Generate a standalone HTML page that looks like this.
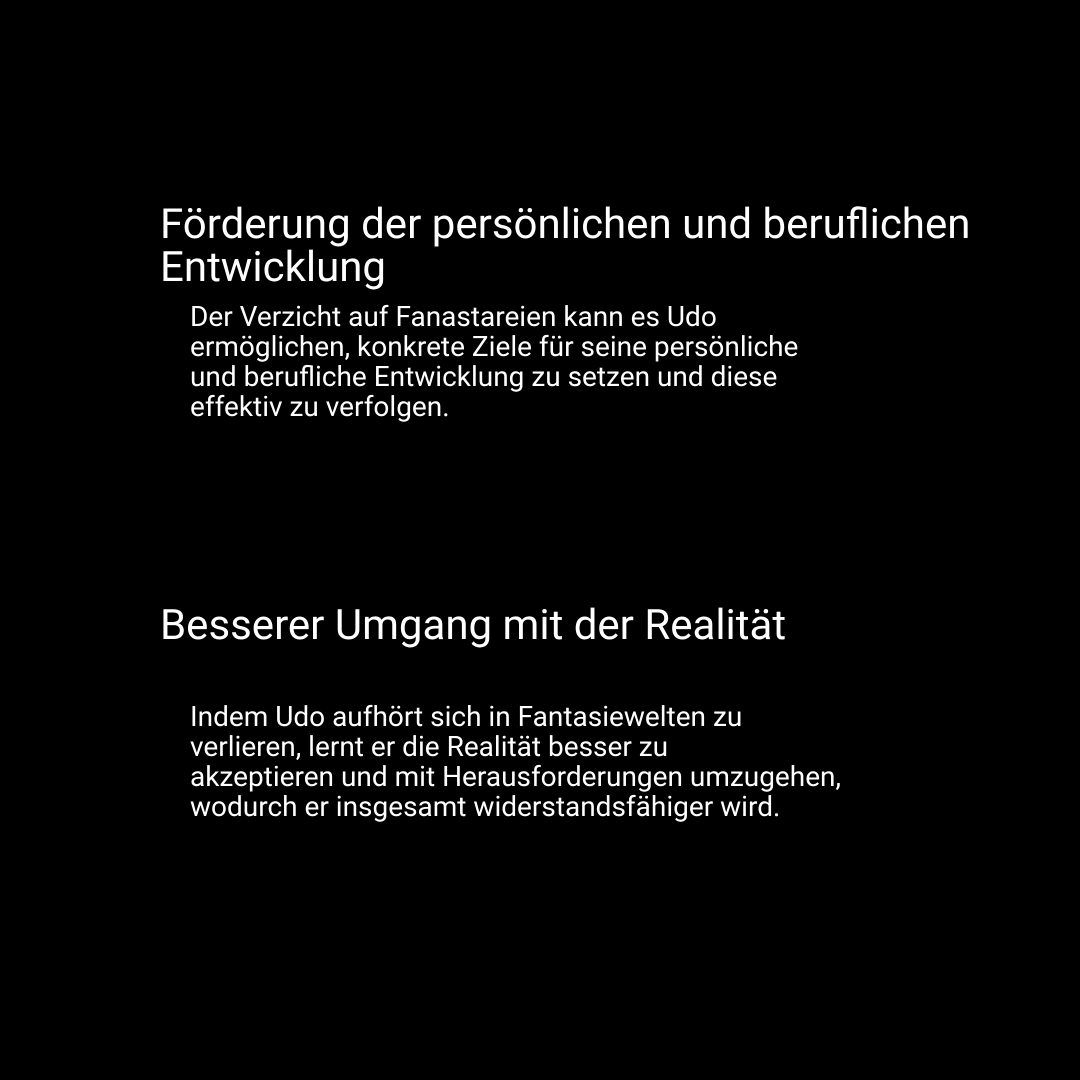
<!DOCTYPE html>
<html><head><meta charset="utf-8"><style>
html,body{margin:0;padding:0;background:#000;width:1080px;height:1080px;overflow:hidden}
body{position:relative;font-family:"Roboto","Liberation Sans",sans-serif;color:#fff}
.h{position:absolute;left:160px;font-size:42px;line-height:43px;white-space:nowrap}
.p{position:absolute;left:190px;font-size:28px;line-height:30px;white-space:nowrap}
</style></head><body>
<div class="h" style="top:203px">Förderung der persönlichen und beruflichen<br>Entwicklung</div>
<div class="p" style="top:302px">Der Verzicht auf Fanastareien kann es Udo<br>ermöglichen, konkrete Ziele für seine persönliche<br>und berufliche Entwicklung zu setzen und diese<br>effektiv zu verfolgen.</div>
<div class="h" style="top:604px">Besserer Umgang mit der Realität</div>
<div class="p" style="top:702px">Indem Udo aufhört sich in Fantasiewelten zu<br>verlieren, lernt er die Realität besser zu<br>akzeptieren und mit Herausforderungen umzugehen,<br>wodurch er insgesamt widerstandsfähiger wird.</div>
</body></html>
